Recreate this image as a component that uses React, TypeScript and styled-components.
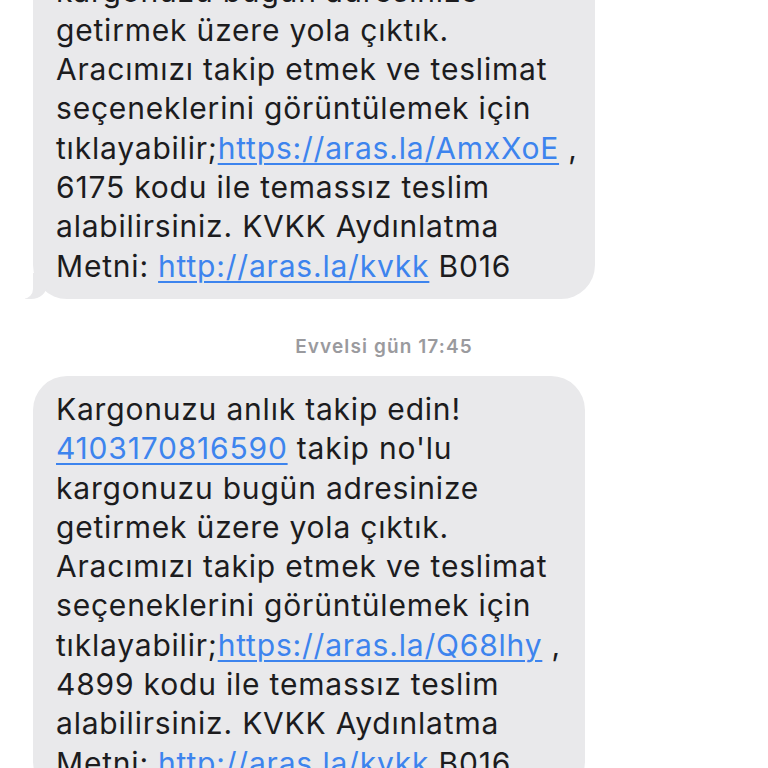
import React from "react";
import styled, { createGlobalStyle } from "styled-components";

const Global = createGlobalStyle`
  html, body { margin: 0; padding: 0; background: #ffffff; overflow: hidden; }
  body { font-family: "Inter", "Roboto", "Liberation Sans", sans-serif; }
`;

const Thread = styled.div`
  display: flex;
  flex-direction: column;
  align-items: flex-start;
  margin-top: -121px;
  padding-left: 33px;
`;

const Bubble = styled.div<{ $w: number; $tail?: boolean }>`
  position: relative;
  box-sizing: border-box;
  width: ${(p) => p.$w}px;
  background: #e9e9eb;
  border-radius: 34px;
  padding: 14px 12px 13px 23px;
  color: #1c1c1e;
  font-size: 30px;
  line-height: 39.3px;
  letter-spacing: 0.8px;
  white-space: nowrap;
  &::before {
    content: "";
    display: ${(p) => (p.$tail ? "block" : "none")};
    position: absolute;
    z-index: 0;
    bottom: 0;
    left: -8px;
    height: 26px;
    width: 22px;
    background: #e9e9eb;
    border-bottom-right-radius: 16px 14px;
  }
  &::after {
    content: "";
    display: ${(p) => (p.$tail ? "block" : "none")};
    position: absolute;
    z-index: 1;
    bottom: 0;
    left: -12px;
    width: 12px;
    height: 26px;
    background: #ffffff;
    border-bottom-right-radius: 10px;
  }
`;

const Line = styled.div`
  position: relative;
  z-index: 2;
`;

const Link = styled.span`
  color: #3d84ee;
  text-decoration: underline;
  text-decoration-thickness: 1.5px;
  text-underline-offset: 4px;
`;

const Stamp = styled.div`
  align-self: stretch;
  margin: 36px 0 17px -33px;
  text-align: center;
  font-size: 19px;
  font-weight: 600;
  letter-spacing: 1.1px;
  color: #9a9a9e;
  line-height: 24px;
`;

function Message({ no, url, code, w, tail }: { no: string; url: string; code: string; w: number; tail?: boolean }) {
  return (
    <Bubble $w={w} $tail={tail}>
      <Line>Kargonuzu anlık takip edin!</Line>
      <Line>
        <Link>{no}</Link> takip no'lu
      </Line>
      <Line>kargonuzu bugün adresinize</Line>
      <Line>getirmek üzere yola çıktık.</Line>
      <Line>Aracımızı takip etmek ve teslimat</Line>
      <Line>seçeneklerini görüntülemek için</Line>
      <Line>
        tıklayabilir;<Link>{url}</Link> ,
      </Line>
      <Line>{code} kodu ile temassız teslim</Line>
      <Line>alabilirsiniz. KVKK Aydınlatma</Line>
      <Line>
        Metni: <Link>http://aras.la/kvkk</Link> B016
      </Line>
    </Bubble>
  );
}

export default function App() {
  return (
    <>
      <Global />
      <Thread>
        <Message no="4103170816590" url="https://aras.la/AmxXoE" code="6175" w={562} tail />
        <Stamp>Evvelsi gün 17:45</Stamp>
        <Message no="4103170816590" url="https://aras.la/Q68lhy" code="4899" w={552} tail />
      </Thread>
    </>
  );
}
